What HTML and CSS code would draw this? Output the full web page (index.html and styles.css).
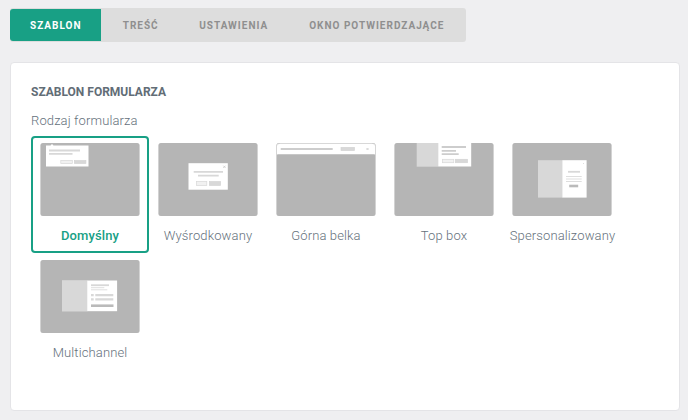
FILE: index.html
```html
<!DOCTYPE html>
<html lang="pl">
<head>
<meta charset="utf-8">
<title>Szablon formularza</title>
<link rel="stylesheet" href="styles.css">
</head>
<body>
<nav class="tabs">
  <a class="tab tab-active">SZABLON</a>
  <a class="tab tab-content">TREŚĆ</a>
  <a class="tab">USTAWIENIA</a>
  <a class="tab">OKNO POTWIERDZAJĄCE</a>
</nav>
<main class="card">
  <h2 class="title">SZABLON FORMULARZA</h2>
  <p class="subtitle">Rodzaj formularza</p>
  <div class="options">
    <div class="option selected">
      <svg class="thumb" viewBox="0 0 100 73">
        <rect class="frame" x=".4" y="0" width="99.200" height="73" rx="2.5"/>
        <path class="paper" d="M6 2.400h4.500L12 1l1.500 1.400H48.500V23.600H6z"/>
        <path class="line" d="M9 7.500h31M9 10.900h23.500"/>
        <rect class="button-light" x="20.800" y="17.500" width="11.500" height="3"/>
        <rect class="button" x="34.400" y="17.500" width="11.500" height="3"/>
      </svg>
      <span class="label">Domyślny</span>
    </div>
    <div class="option">
      <svg class="thumb" viewBox="0 0 100 73">
        <rect class="frame" x=".4" y="0" width="99.200" height="73" rx="2.5"/>
        <rect class="paper" x="30.500" y="20.200" width="39.300" height="26.500"/>
        <path class="line" d="M35.700 28.900h29.300M40 32.700h20.700"/>
        <rect class="button-light" x="38.400" y="38.500" width="10.400" height="4"/>
        <rect class="button" x="51.400" y="38.500" width="11.200" height="4"/>
        <path class="cross" d="M65.300 22.700l2.200 2.200m0-2.200l-2.200 2.200"/>
      </svg>
      <span class="label">Wyśrodkowany</span>
    </div>
    <div class="option">
      <svg class="thumb" viewBox="0 0 100 73">
        <rect class="frame" x=".4" y="0" width="99.200" height="73" rx="2.5"/>
        <path class="header-edge" d="M.9 12V3A2.500 2.500 0 0 1 3.400.5h93.200A2.500 2.500 0 0 1 99.100 3v9"/>
        <path class="paper" d="M1 11.300V3a2 2 0 0 1 2-2h94a2 2 0 0 1 2 2v8.300z"/>
        <path class="line line-dark" d="M4.700 6h52"/>
        <rect class="button" x="65" y="4.400" width="13.500" height="3.200"/>
        <path class="cross" d="M90.500 5l2 2m0-2l-2 2"/>
      </svg>
      <span class="label">Górna belka</span>
    </div>
    <div class="option">
      <svg class="thumb" viewBox="0 0 100 73">
        <rect class="frame" x=".4" y="0" width="99.200" height="73" rx="2.5"/>
        <rect class="picture" x="22.700" y="0" width="21.500" height="23.700"/>
        <rect class="paper" x="44.200" y="0" width="33" height="23.500"/>
        <path class="line line-dark" d="M47.700 4h24.300M47.700 7.900h14.300M47.700 11.100h17"/>
        <rect class="button-light" x="48.400" y="16.300" width="11.400" height="3.400"/>
        <rect class="button" x="61.400" y="16.300" width="12" height="3.400"/>
      </svg>
      <span class="label">Top box</span>
    </div>
    <div class="option">
      <svg class="thumb" viewBox="0 0 100 73">
        <rect class="frame" x=".4" y="0" width="99.200" height="73" rx="2.5"/>
        <rect class="picture" x="26" y="17.200" width="24.500" height="37.400"/>
        <rect class="paper" x="50.300" y="17.200" width="24.300" height="37.400"/>
        <path class="line" d="M56 28.800h12"/>
        <path class="line line-thin" d="M54 33.500h15.700M54 36h15.700M54 38.500h15.700"/>
        <path class="line line-button" d="M57.200 43h9"/>
        <path class="line line-thin" d="M71 20.500h1"/>
      </svg>
      <span class="label label-long">Spersonalizowany</span>
    </div>
    <div class="option">
      <svg class="thumb" viewBox="0 0 100 73">
        <rect class="frame" x=".4" y="0" width="99.200" height="73" rx="2.5"/>
        <rect class="picture" x="22" y="20.200" width="25.500" height="31.300"/>
        <rect class="paper" x="47.200" y="20.500" width="29.900" height="30.700"/>
        <path class="line" d="M51 25.200h18"/>
        <path class="line line-thin" d="M51 27.700h13.300M51 29.800h16.300"/>
        <path class="line line-wide" d="M51 35.200h2.700M55.300 35.200h18M51 39.300h2.700M55.300 39.300h18"/>
        <path class="line line-button" d="M51 45.700h22.500"/>
      </svg>
      <span class="label">Multichannel</span>
    </div>
  </div>
</main>
</body>
</html>
```
FILE: styles.css
```css
* { box-sizing: border-box; }

body {
  margin: 0;
  height: 420px;
  padding: 8px 8px 9px 10px;
  background: #efeff1;
  font-family: Roboto, sans-serif;
  color: #65717c;
}

.tabs {
  display: flex;
  width: 456px;
  height: 34px;
  padding: 1px 0;
  background: #ddd;
  border-radius: 3px;
}

.tab {
  padding: 0 20px 0 21px;
  font-size: 10px;
  font-weight: 700;
  line-height: 33px;
  letter-spacing: 1px;
  white-space: nowrap;
  color: #8f8f8f;
}

.tab-active {
  width: 91px;
  padding: 0 0 0 20px;
  background: #18a085;
  border-radius: 3px 0 0 3px;
  color: #fff;
}

.tab-content { padding: 0 19.6px 0 21.7px; }

.card {
  height: 349px;
  margin-top: 20px;
  padding: 21px 20px 20px;
  background: #fff;
  border: 1px solid #e4e4e7;
  border-radius: 4px;
}

.title {
  margin: 0;
  font-size: 12px;
  font-weight: 700;
  line-height: 16px;
  color: #626d76;
}

.subtitle {
  margin: 12px 0 7px;
  font-size: 13px;
  font-weight: 300;
  line-height: 17px;
  letter-spacing: .13px;
}

.options {
  display: flex;
  flex-wrap: wrap;
  width: 600px;
}

.option {
  display: flex;
  flex-direction: column;
  align-items: center;
  width: 118px;
  height: 117px;
  padding-top: 5px;
  border: 2px solid transparent;
  border-radius: 4px;
}

.thumb {
  display: block;
  width: 100px;
  height: 73px;
}

.label {
  margin-top: 11px;
  font-size: 13px;
  font-weight: 300;
  line-height: 17px;
  letter-spacing: .13px;
  white-space: nowrap;
}

.label-long { padding-left: 1px; }

.selected { border-color: #18a085; }

.selected .label {
  font-weight: 500;
  color: #18a085;
}

.frame { fill: #b5b5b5; }
.header-edge { fill: none; stroke: #d8d8d8; stroke-width: 1; }
.paper { fill: #fff; }
.picture { fill: #d8d8d8; }
.line { fill: none; stroke: #d8d8d8; stroke-width: 1.8; }
.line-dark { stroke: #cdcdcd; }
.line-thin { stroke: #dedede; stroke-width: 1; }
.line-wide { stroke-width: 2.2; }
.line-button { stroke: #bababa; stroke-width: 2.6; }
.button { fill: #d8d8d8; stroke: #d4d4d4; stroke-width: .7; }
.button-light { fill: #f1f1f1; stroke: #d8d8d8; stroke-width: .7; }
.cross { fill: none; stroke: #c7c7c7; stroke-width: .8; }
```
